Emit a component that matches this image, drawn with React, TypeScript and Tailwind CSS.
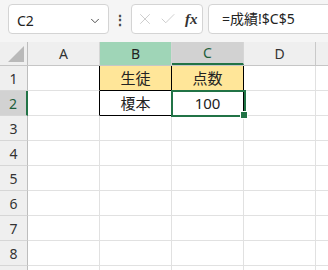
import { ChevronDown, X, Check } from "lucide-react"

const FONT = { fontFamily: '"Noto Sans", "Noto Sans CJK JP", sans-serif' }

const ROWS = [1, 2, 3, 4, 5, 6, 7, 8, 9]

function Cell({ children, className = "" }: { children?: React.ReactNode; className?: string }) {
  return (
    <div className={`w-[72px] shrink-0 h-full border-r border-b flex items-center justify-center text-[15px] text-[#222] ${className}`}>
      {children}
    </div>
  )
}

export default function App() {
  return (
    <div className="w-[328px] h-[270px] overflow-hidden bg-white" style={FONT}>
      {/* Formula bar */}
      <div className="h-[42px] bg-[#f5f5f5] flex items-start pt-[4px] pl-[8px] overflow-hidden">
        <div className="w-[101px] h-[30px] shrink-0 bg-white border border-[#d4d4d4] rounded-[4px] flex items-center pl-[8px] pr-[6px] pt-[3px]">
          <span className="text-[14px] text-[#222]">C2</span>
          <ChevronDown className="ml-auto text-[#444]" size={14} strokeWidth={1.6} />
        </div>
        <div className="w-[22px] h-[30px] shrink-0 flex items-center justify-center text-[14px] font-bold text-[#444]">⋮</div>
        <div className="w-[72px] h-[30px] shrink-0 bg-white border border-[#d4d4d4] rounded-[4px] flex items-center pl-[4px] gap-[5px]">
          <X size={18} strokeWidth={1.1} className="text-[#c4c4c4]" />
          <Check size={18} strokeWidth={1.1} className="text-[#c4c4c4]" />
          <span className="ml-[3px] text-[15px] italic font-bold text-[#333]" style={{ fontFamily: '"Liberation Serif", serif' }}>fx</span>
        </div>
        <div className="w-[160px] h-[30px] shrink-0 ml-[5px] bg-white border border-[#d4d4d4] rounded-[4px] flex items-center pl-[13px] pb-[2px]">
          <span className="text-[14px] text-[#222]">=成績!$C$5</span>
        </div>
      </div>

      {/* Grid */}
      <div className="relative">
        {/* column headers */}
        <div className="flex h-[24px] bg-[#efefef] border-b border-[#c6c6c6]">
          <div className="w-[28px] shrink-0 h-full border-r border-[#bdbdbd] relative">
            <div className="absolute right-[3px] bottom-[3px] w-0 h-0 border-l-[16px] border-l-transparent border-b-[16px] border-b-[#b9b9b9]" />
          </div>
          <div className="w-[72px] shrink-0 flex items-center justify-center border-r border-[#d6d6d6] text-[14px] text-[#333]">A</div>
          <div className="w-[72px] shrink-0 flex items-center justify-center border-r border-[#d6d6d6] bg-[#9fd5b7] text-[14px] text-[#222]">B</div>
          <div className="w-[72px] shrink-0 flex items-center justify-center border-r border-[#d6d6d6] bg-[#d2d2d2] border-b-2 border-b-[#217346] text-[14px] text-[#1e5e3b]">C</div>
          <div className="w-[72px] shrink-0 flex items-center justify-center border-r border-[#c9c9c9] text-[14px] text-[#333]">D</div>
          <div className="flex-1" />
        </div>

        {ROWS.map((r) => (
          <div key={r} className="flex h-[25px]">
            <div
              className={`w-[28px] shrink-0 h-full flex items-center justify-center text-[14px] border-b border-[#d6d6d6] ${
                r === 2
                  ? "bg-[#d2d2d2] border-r-2 border-r-[#217346] text-[#1e5e3b]"
                  : "bg-[#efefef] border-r border-r-[#bdbdbd] text-[#333]"
              }`}
            >
              {r < 9 ? r : null}
            </div>
            <Cell className={r <= 2 ? "border-r-black border-b-[#e1e1e1]" : "border-[#e1e1e1]"} />
            <Cell className={r <= 2 ? `border-black ${r === 1 ? "bg-[#ffe699]" : ""}` : "border-[#e1e1e1]"}>
              {r === 1 ? "生徒" : r === 2 ? "榎本" : null}
            </Cell>
            <Cell className={r <= 2 ? `border-black ${r === 1 ? "bg-[#ffe699]" : ""}` : "border-[#e1e1e1]"}>
              {r === 1 ? "点数" : r === 2 ? "100" : null}
            </Cell>
            <Cell className="border-[#e1e1e1]" />
            <div className="flex-1 border-b border-[#e1e1e1]" />
          </div>
        ))}

        {/* selection on C2 */}
        <div className="absolute left-[171px] top-[48px] w-[75px] h-[27px] border-2 border-[#217346]">
          <div className="absolute -right-[4px] -bottom-[4px] w-[6px] h-[6px] bg-[#217346] border border-white box-content" />
        </div>
      </div>
    </div>
  )
}
